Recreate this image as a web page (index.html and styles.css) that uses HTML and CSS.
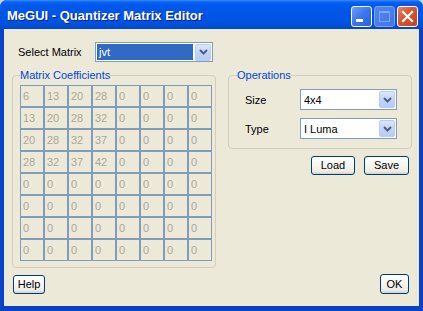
FILE: index.html
```html
<!DOCTYPE html>
<html>
<head>
<meta charset="utf-8">
<title>MeGUI - Quantizer Matrix Editor</title>
<link rel="stylesheet" href="styles.css">
</head>
<body>
<div class="window">
  <div class="titlebar">
    <span class="title">MeGUI - Quantizer Matrix Editor</span>
    <div class="tb-buttons">
      <div class="tb-btn tb-min"><span class="min-bar"></span></div>
      <div class="tb-btn tb-max disabled"><span class="max-box"></span></div>
      <div class="tb-btn tb-close">
        <svg width="13" height="13" viewBox="0 0 13 13"><path d="M2 2 L11 11 M11 2 L2 11" stroke="#fff" stroke-width="2.2" stroke-linecap="square"/></svg>
      </div>
    </div>
  </div>
  <div class="client">
    <div class="select-row">
      <span class="lbl sel-lbl">Select Matrix</span>
      <div class="combo combo-matrix">
        <span class="combo-text selected">jvt</span>
        <span class="drop"><svg width="9" height="6" viewBox="0 0 9 6"><polyline points="1,1 4.5,4.5 8,1" fill="none" stroke="#4D6185" stroke-width="2"/></svg></span>
      </div>
    </div>
    <div class="main">
      <fieldset class="group coeffs">
        <legend>Matrix Coefficients</legend>
        <div class="grid">
          <div class="cell">6</div><div class="cell">13</div><div class="cell">20</div><div class="cell">28</div><div class="cell">0</div><div class="cell">0</div><div class="cell">0</div><div class="cell">0</div>
          <div class="cell">13</div><div class="cell">20</div><div class="cell">28</div><div class="cell">32</div><div class="cell">0</div><div class="cell">0</div><div class="cell">0</div><div class="cell">0</div>
          <div class="cell">20</div><div class="cell">28</div><div class="cell">32</div><div class="cell">37</div><div class="cell">0</div><div class="cell">0</div><div class="cell">0</div><div class="cell">0</div>
          <div class="cell">28</div><div class="cell">32</div><div class="cell">37</div><div class="cell">42</div><div class="cell">0</div><div class="cell">0</div><div class="cell">0</div><div class="cell">0</div>
          <div class="cell">0</div><div class="cell">0</div><div class="cell">0</div><div class="cell">0</div><div class="cell">0</div><div class="cell">0</div><div class="cell">0</div><div class="cell">0</div>
          <div class="cell">0</div><div class="cell">0</div><div class="cell">0</div><div class="cell">0</div><div class="cell">0</div><div class="cell">0</div><div class="cell">0</div><div class="cell">0</div>
          <div class="cell">0</div><div class="cell">0</div><div class="cell">0</div><div class="cell">0</div><div class="cell">0</div><div class="cell">0</div><div class="cell">0</div><div class="cell">0</div>
          <div class="cell">0</div><div class="cell">0</div><div class="cell">0</div><div class="cell">0</div><div class="cell">0</div><div class="cell">0</div><div class="cell">0</div><div class="cell">0</div>
        </div>
      </fieldset>
      <div class="right-col">
        <fieldset class="group ops">
          <legend>Operations</legend>
          <div class="op-row">
            <span class="lbl op-lbl">Size</span>
            <div class="combo combo-op">
              <span class="combo-text">4x4</span>
              <span class="drop"><svg width="9" height="6" viewBox="0 0 9 6"><polyline points="1,1 4.5,4.5 8,1" fill="none" stroke="#4D6185" stroke-width="2"/></svg></span>
            </div>
          </div>
          <div class="op-row">
            <span class="lbl op-lbl">Type</span>
            <div class="combo combo-op">
              <span class="combo-text">I Luma</span>
              <span class="drop"><svg width="9" height="6" viewBox="0 0 9 6"><polyline points="1,1 4.5,4.5 8,1" fill="none" stroke="#4D6185" stroke-width="2"/></svg></span>
            </div>
          </div>
        </fieldset>
        <div class="btn-row">
          <button class="btn btn-load">Load</button>
          <button class="btn btn-save">Save</button>
        </div>
      </div>
    </div>
    <div class="bottom-row">
      <button class="btn btn-help">Help</button>
      <button class="btn btn-ok">OK</button>
    </div>
  </div>
</div>
</body>
</html>
```

FILE: styles.css
```css
html, body {
  margin: 0;
  padding: 0;
  background: #C9D3E6;
}
body {
  width: 423px;
  height: 311px;
  overflow: hidden;
  font-family: "Liberation Sans", Arial, sans-serif;
  font-size: 11px;
}
.window {
  width: 423px;
  height: 311px;
  box-sizing: border-box;
  display: flex;
  flex-direction: column;
  background: #0842C8;
  border-radius: 7px 7px 0 0;
  overflow: hidden;
}
.titlebar {
  height: 29px;
  flex: 0 0 29px;
  display: flex;
  align-items: center;
  justify-content: space-between;
  padding: 0 5px 0 7px;
  background: linear-gradient(#3C8CF8 0px, #0A62F2 2px, #0058EE 5px, #0055E6 14px, #0053E0 22px, #004FD8 26px, #0046C6 29px);
}
.title {
  color: #fff;
  font-weight: bold;
  font-size: 13px;
  letter-spacing: 0;
  text-shadow: 1px 1px 0 #0A1E80;
  margin-top: 1px;
}
.tb-buttons {
  display: flex;
  gap: 2px;
  margin-top: 4px;
}
.tb-btn {
  width: 21px;
  height: 21px;
  box-sizing: border-box;
  border: 1px solid #fff;
  border-radius: 3px;
  background: linear-gradient(135deg, #6E9CF8 0%, #3C74EE 50%, #2A5FE0 100%);
  display: flex;
  align-items: center;
  justify-content: center;
  position: relative;
}
.tb-min {
  align-items: flex-end;
  justify-content: flex-start;
}
.min-bar {
  width: 7px;
  height: 3px;
  background: #fff;
  margin: 0 0 4px 4px;
}
.tb-max.disabled {
  border-color: #7EA5F6;
  background: linear-gradient(135deg, #4F85F0 0%, #3F75EC 100%);
}
.max-box {
  width: 9px;
  height: 8px;
  border: 1px solid #7EA5F6;
  border-top-width: 2px;
}
.tb-close {
  background: linear-gradient(135deg, #E8846A 0%, #D9532E 45%, #C84220 100%);
}
.client {
  flex: 1;
  margin: 0 4px 5px 4px;
  background: #ECE9D8;
  padding: 13px 10px 12px 8px;
  display: flex;
  flex-direction: column;
}
.lbl {
  color: #000;
}
.select-row {
  display: flex;
  align-items: center;
  height: 20px;
}
.sel-lbl {
  width: 77px;
  padding-left: 6px;
  flex: 0 0 auto;
}
.combo {
  box-sizing: border-box;
  border: 1px solid #7F9DB9;
  background: #fff;
  display: flex;
  align-items: center;
  justify-content: space-between;
  padding: 1px;
}
.combo-matrix {
  width: 118px;
  height: 20px;
}
.combo-text {
  padding-left: 2px;
  line-height: 16px;
  height: 16px;
}
.combo-text.selected {
  background: #316AC5;
  color: #fff;
  flex: 1;
  margin-right: 2px;
}
.drop {
  width: 16px;
  height: 17px;
  box-sizing: border-box;
  border: 1px solid #B9CCF5;
  border-radius: 2px;
  background: linear-gradient(#DCE6FD, #C3D4FA 50%, #B6CBF8);
  display: flex;
  align-items: center;
  justify-content: center;
  flex: 0 0 auto;
}
.main {
  display: grid;
  grid-template-columns: 204px 184px;
  column-gap: 12px;
  margin-top: 7px;
  align-items: start;
}
.group {
  margin: 0;
  border: 1px solid #D0D0BF;
  border-radius: 4px;
  min-width: 0;
}
.group legend {
  color: #0046D5;
  padding: 0;
  line-height: 13px;
}
.coeffs {
  padding: 3px 3px 6px 7px;
}
.grid {
  display: grid;
  grid-template-columns: repeat(8, 24px);
  grid-auto-rows: 22px;
}
.cell {
  box-sizing: border-box;
  border: 1px solid #7F9DB9;
  color: #ACA899;
  padding: 4px 0 0 2px;
  line-height: 12px;
}
.right-col {
  display: flex;
  flex-direction: column;
}
.ops {
  padding: 7px 14px 9px 8px;
  display: flex;
  flex-direction: column;
  gap: 8px;
}
.op-row {
  display: flex;
  align-items: center;
}
.op-lbl {
  width: 55px;
  margin-left: 8px;
  flex: 0 0 auto;
}
.combo-op {
  width: 97px;
  height: 21px;
}
.combo-op .combo-text {
  padding-left: 2px;
}
.btn-row {
  display: flex;
  justify-content: flex-end;
  gap: 9px;
  margin-top: 7px;
  padding-right: 3px;
}
.btn {
  font-family: "Liberation Sans", Arial, sans-serif;
  font-size: 11px;
  color: #000;
  box-sizing: border-box;
  height: 19px;
  padding: 0;
  border: 1px solid #003C74;
  border-radius: 3px;
  background: linear-gradient(#FFFFFF 0%, #F6F5F0 50%, #ECEBE5 85%, #D6D0C5 100%);
  line-height: 15px;
}
.btn-load { width: 44px; }
.btn-save { width: 45px; }
.bottom-row {
  margin-top: auto;
  display: flex;
  justify-content: space-between;
  align-items: flex-end;
}
.btn-help {
  width: 32px;
  margin-left: 1px;
}
.btn-ok {
  width: 29px;
  height: 20px;
}
```
